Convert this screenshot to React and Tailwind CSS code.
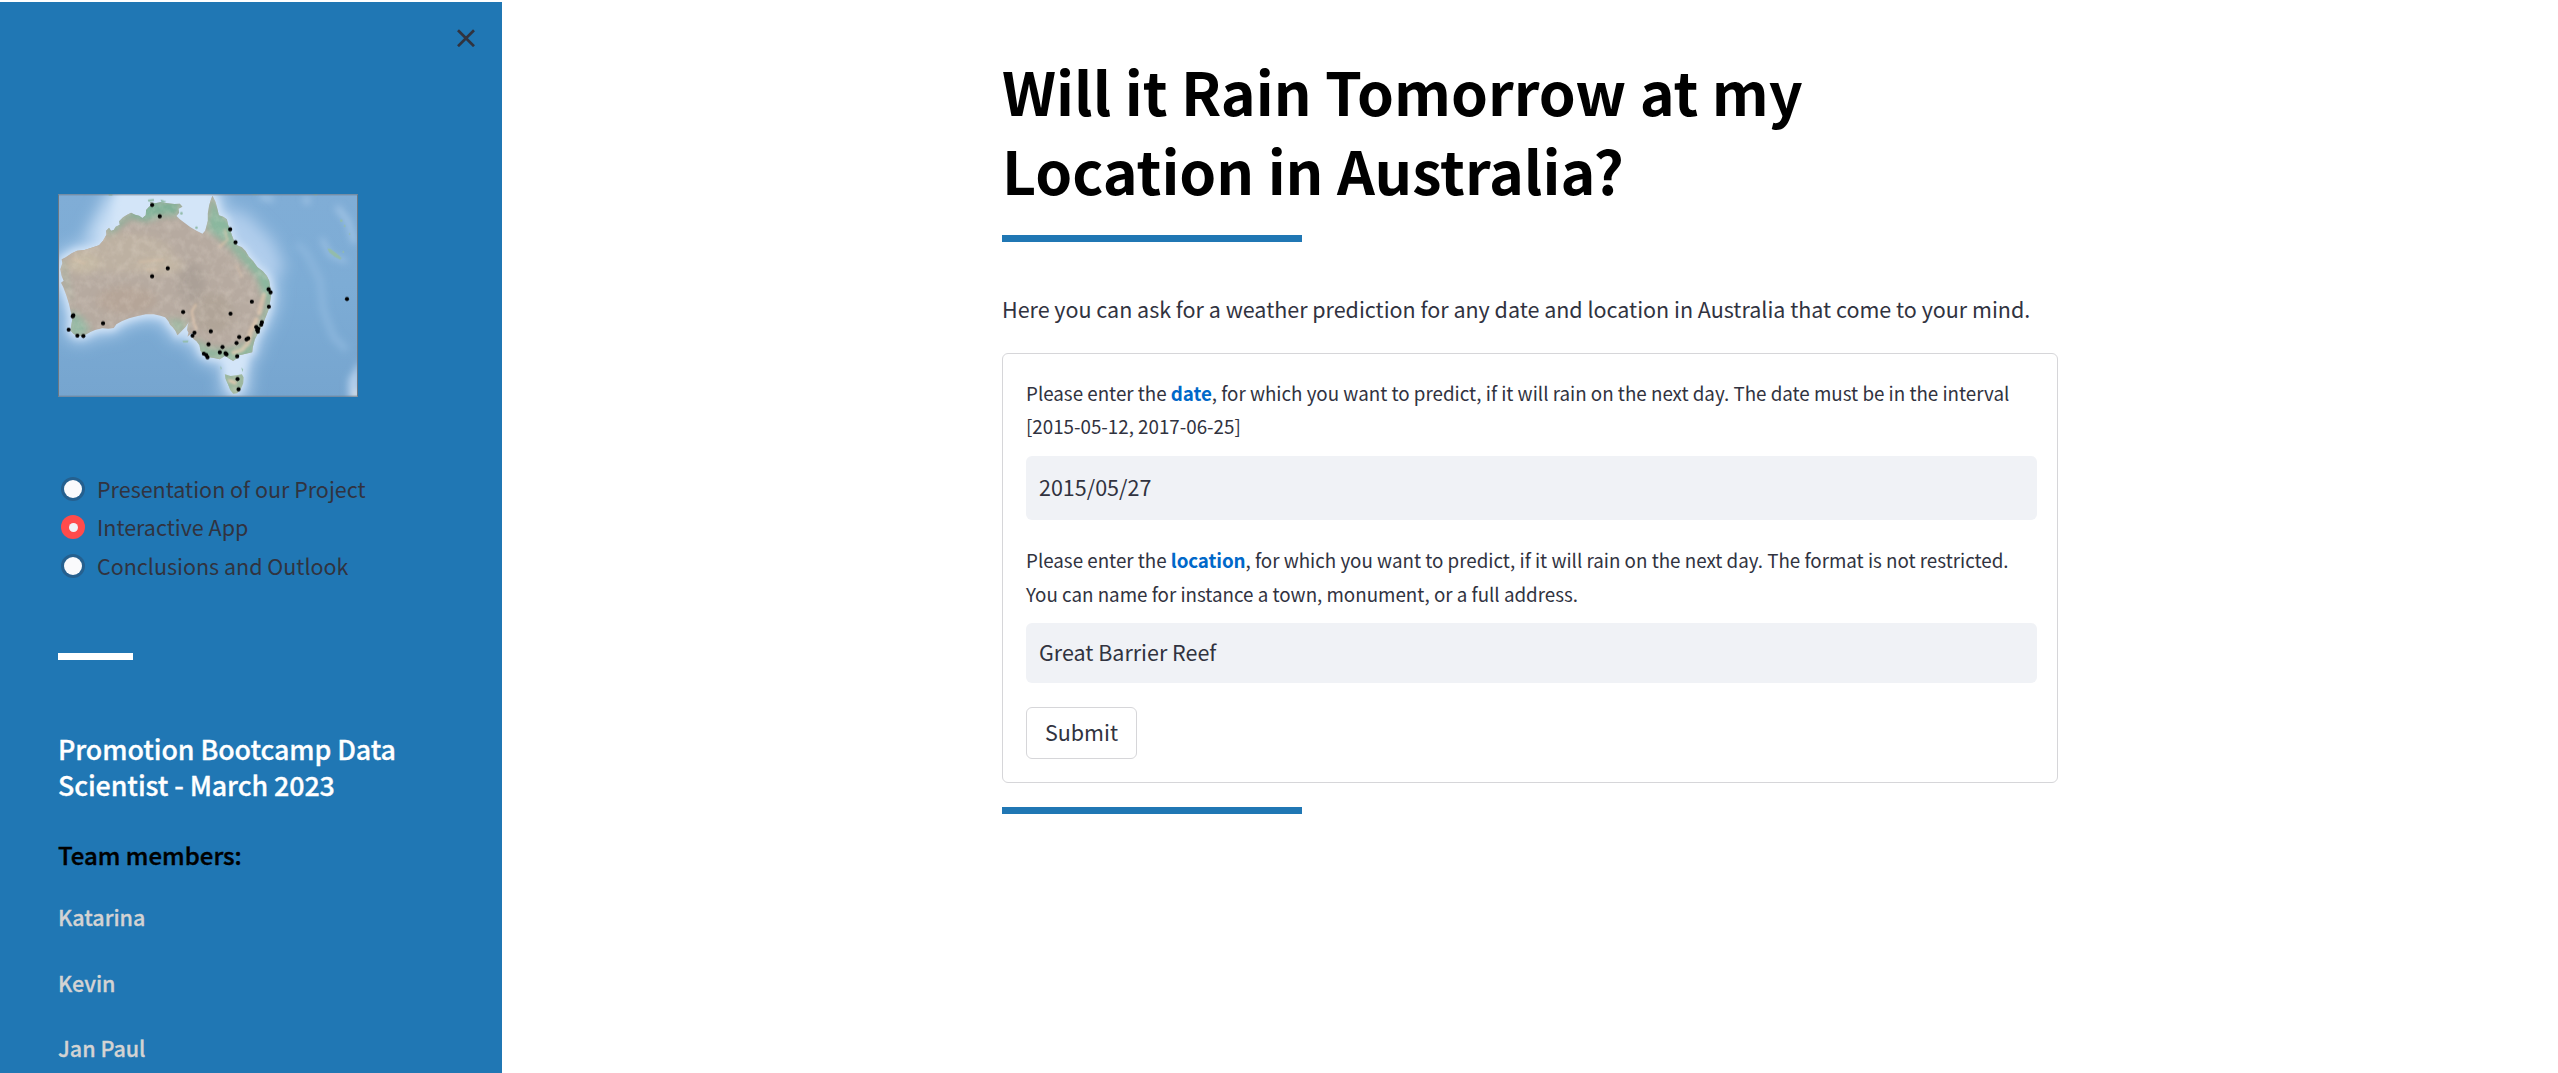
const FONT = "font-['Noto_Sans_CJK_SC','Noto_Sans',sans-serif]";

const MAINLAND =
  "M518 47 L527 66 L533 88 L537 106 L550 110 L561 118 L565 135 L571 150 L577 168 L584 186 L592 196 L606 202 L617 213 L627 230 L640 244 L653 262 L669 274 L681 288 L688 302 L691 322 L694 342 L691 362 L688 384 L681 402 L674 420 L668 434 L656 456 L645 478 L639 500 L637 517 L618 521 L598 526 L592 534 L580 543 L566 535 L556 527 L540 538 L522 534 L503 531 L490 524 L482 512 L479 496 L470 484 L461 477 L456 470 L462 458 L452 462 L443 470 L446 458 L442 450 L444 434 L447 426 L437 441 L426 452 L413 466 L407 452 L399 442 L391 434 L386 424 L376 412 L362 407 L342 403 L318 403 L294 408 L268 415 L246 424 L230 433 L222 444 L206 446 L188 445 L168 449 L152 456 L132 467 L112 468 L101 461 L93 452 L95 436 L98 416 L94 398 L88 372 L80 346 L71 322 L64 308 L72 302 L66 288 L62 268 L68 250 L66 238 L78 232 L96 220 L112 212 L134 210 L156 203 L178 196 L190 182 L200 164 L199 152 L208 143 L214 152 L222 150 L228 140 L240 134 L238 124 L250 112 L262 104 L274 98 L286 104 L298 107 L308 114 L318 106 L319 90 L328 80 L336 74 L330 66 L346 70 L364 66 L384 70 L404 72 L420 71 L428 80 L416 86 L418 98 L410 108 L420 118 L436 130 L452 142 L470 152 L488 161 L496 152 L500 138 L504 122 L504 100 L508 76 L514 56 Z";
const TASMANIA =
  "M555 583 L572 588 L590 586 L606 583 L611 592 L610 610 L603 626 L592 640 L580 641 L571 630 L564 612 L557 596 Z";

const STATIONS = [
  [337, 75], [360, 109], [571, 148], [587, 187], [384, 265], [337, 289],
  [430, 396], [572, 401], [636, 365], [686, 328], [692, 337], [687, 380],
  [921, 357], [101, 406], [99, 409], [87, 449], [113, 467], [131, 468],
  [190, 430], [464, 458], [458, 467], [513, 454], [506, 493], [492, 521],
  [499, 525], [503, 532], [548, 501], [540, 517], [557, 520], [560, 523],
  [590, 489], [598, 471], [620, 478], [625, 475], [592, 529], [666, 427],
  [664, 434], [649, 441], [655, 446], [652, 450], [654, 455], [593, 597],
  [596, 628],
];

function AustraliaMap() {
  return (
    <svg className="block h-[203px] w-[300px]" viewBox="55 42 899 609" preserveAspectRatio="none" role="img" aria-label="Weather stations in Australia">
      <defs>
        <filter id="b3" x="-30%" y="-30%" width="160%" height="160%"><feGaussianBlur stdDeviation="3" /></filter>
        <filter id="b10" x="-50%" y="-50%" width="200%" height="200%"><feGaussianBlur stdDeviation="11" /></filter>
        <filter id="b20" x="-50%" y="-50%" width="200%" height="200%"><feGaussianBlur stdDeviation="24" /></filter>
        <filter id="edge" x="-5%" y="-5%" width="110%" height="110%"><feGaussianBlur stdDeviation="1.3" /></filter>
        <filter id="relief" x="0" y="0" width="100%" height="100%">
          <feTurbulence type="fractalNoise" baseFrequency="0.04" numOctaves="4" seed="7" />
          <feColorMatrix values="0 0 0 0 0.95  0 0 0 0 0.87  0 0 0 0 0.78  1.4 0 0 0 -0.55" />
        </filter>
        <linearGradient id="sea" x1="0" y1="0" x2="0" y2="1">
          <stop offset="0" stopColor="#80add6" />
          <stop offset="0.45" stopColor="#7dacd5" />
          <stop offset="1" stopColor="#76a5cf" />
        </linearGradient>
        <clipPath id="land"><path d={MAINLAND} /><path d={TASMANIA} /></clipPath>
      </defs>
      <rect x="55" y="42" width="899" height="609" fill="url(#sea)" />
      <g fill="#b9d4ef" filter="url(#b20)">
        <path d={MAINLAND} stroke="#b3d0ee" strokeWidth="42" strokeLinejoin="round" />
        <path d="M215 20 L550 20 L520 160 L440 160 L200 175 L130 180Z" fill="#c7def5" />
        <path d="M540 80 L620 100 L700 180 L735 260 L700 310 L590 200Z" fill="#b0cdec" />
        <path d="M540 500 L640 500 L625 660 L545 650Z" />
      </g>
      <g filter="url(#b10)">
        <path d={MAINLAND} fill="#d6e6f7" stroke="#cfe2f6" strokeWidth="17" strokeLinejoin="round" />
        <path d="M232 36 L520 36 L500 165 L470 160 L400 110 L320 110 L212 145Z" fill="#d3e5f8" />
        <path d={TASMANIA} fill="#d6e6f7" stroke="#c6dcf4" strokeWidth="12" />
        <path d="M545 530 L630 520 L615 590 L555 590Z" fill="#d3e5f8" />
        <path d="M845 175 L870 225 L920 245" fill="none" stroke="#a6c7e7" strokeWidth="10" />
        <path d="M660 50 L700 58 M798 50 L802 72 M890 80 L925 125 L944 190" fill="none" stroke="#a6c7e7" strokeWidth="15" />
        <path d="M770 190 L800 220 L840 300 L850 390 L880 470 L920 510" fill="none" stroke="#8ab5dc" strokeWidth="22" />
        <path d="M960 540 L925 600 L925 655 L960 655Z" fill="#b5d0ec" />
        <path d="M960 625 L935 655 L960 655Z" fill="#fff3df" />
      </g>
      <g filter="url(#edge)">
        <path d={MAINLAND} fill="#b6aaa0" />
        <path d={TASMANIA} fill="#a5b9a0" />
      </g>
      <g clipPath="url(#land)">
        <g filter="url(#b10)">
          <ellipse cx="250" cy="220" rx="150" ry="60" fill="#bdb1a2" />
          <ellipse cx="130" cy="250" rx="50" ry="30" fill="#c5b9a5" />
          <ellipse cx="360" cy="255" rx="70" ry="28" fill="#c2b6a4" />
          <ellipse cx="455" cy="310" rx="40" ry="60" fill="#aba097" />
          <ellipse cx="520" cy="400" rx="60" ry="60" fill="#b0a498" />
          <ellipse cx="260" cy="360" rx="90" ry="40" fill="#b5a598" />
          <path d="M196 170 L210 140 L275 95 L330 60 L430 66 L412 108 L370 104 L320 124 L270 112 L225 152Z" fill="#7fb198" />
          <path d="M518 40 L540 100 L575 125 L590 190 L645 240 L700 300 L700 390 L675 360 L650 290 L600 235 L560 190 L510 155 L500 140Z" fill="#8ab89f" />
          <path d="M60 235 L72 240 L100 380 L80 330Z" fill="#a5b5a0" />
          <path d="M85 390 L125 410 L150 445 L130 475 L85 470Z" fill="#94b8a3" />
          <path d="M378 415 L445 425 L415 470Z" fill="#9ab7a0" />
          <path d="M460 475 L510 505 L560 510 L630 490 L645 525 L580 550 L480 530Z" fill="#8fb79e" />
          <path d="M690 340 L695 380 L640 525 L628 500 L660 425Z" fill="#8bb69d" />
          <path d="M555 580 L575 590 L570 640 L555 610Z M600 580 L615 590 L600 640Z" fill="#8ab49c" />
        </g>
        <g fill="none" stroke="#e6cab0" strokeLinecap="round" filter="url(#b3)">
          <path d="M672 345 L664 372 L658 400" strokeWidth="13" opacity=".65" />
          <path d="M650 418 L632 455 L624 490 L606 510 L580 518" strokeWidth="13" opacity=".7" />
          <path d="M468 374 L456 394 L462 428 L470 448" strokeWidth="6" opacity=".8" />
          <path d="M555 150 L562 180 L540 200" strokeWidth="9" opacity=".5" />
          <path d="M570 602 L585 608" strokeWidth="11" opacity=".85" />
          <path d="M300 246 L370 240 M320 268 L350 270 M100 236 L135 250 M590 255 L605 290" strokeWidth="6" opacity=".4" />
        </g>
        <rect x="55" y="42" width="640" height="609" filter="url(#relief)" opacity=".3" />
      </g>
      <g fill="#93bcab" filter="url(#edge)">
        <path d="M862 205 L872 207 L890 220 L905 234 L901 239 L884 230 L868 217Z" />
        <circle cx="904" cy="122" r="4" /><circle cx="914" cy="138" r="3" /><circle cx="929" cy="162" r="2.5" />
        <circle cx="910" cy="216" r="3" /><circle cx="425" cy="100" r="4" /><circle cx="470" cy="143" r="4" />
        <path d="M428 482 L446 481 L444 487 L430 487Z M541 558 L546 564 L543 570Z M604 562 L610 568 L608 576Z" />
        <path d="M324 59 L342 57 L343 63 L326 65Z M362 58 L380 64 L366 69Z" />
        <path d="M205 43 H218 V47 H208Z M634 42 H652 V45 H640Z M816 42 H834 L828 47Z" />
      </g>
      <g fill="#050505" filter="url(#edge)">
        {STATIONS.map(([x, y], i) => <circle key={i} cx={x} cy={y} r="6.2" />)}
      </g>
      <rect x="56.5" y="43.5" width="896" height="606" fill="none" stroke="#6c7884" strokeWidth="3" />
    </svg>
  );
}

function Radio({ label, checked }) {
  return (
    <label className="flex h-[38.5px] items-center">
      <span className={checked
        ? "-mt-px flex size-6 items-center justify-center rounded-full bg-[#ff4b4b]"
        : "flex size-6 items-center justify-center rounded-full bg-[#25608f]"}>
        <span className={checked ? "size-[9px] rounded-full bg-[#f0f2f6]" : "size-[18px] rounded-full bg-[#fafafc]"} />
      </span>
      <span className={`ml-3 text-[21.5px] leading-[38px] whitespace-nowrap ${checked ? "-mt-px" : ""}`}>{label}</span>
    </label>
  );
}

function Field({ label, value, labelClass, inputClass }) {
  return (
    <div>
      <p className={`text-[18.78px] whitespace-nowrap ${labelClass}`}>{label}</p>
      <div className={`flex items-center rounded-md bg-[#f0f2f6] px-[13px] pb-[2px] text-[21.5px] ${inputClass}`}>{value}</div>
    </div>
  );
}

const MEMBERS = ["Katarina", "Kevin", "Jan Paul"];

export default function App() {
  return (
    <div className={`flex h-[1073px] overflow-hidden bg-white text-[#31333f] ${FONT}`}>
      <aside className="mt-[2px] w-[502px] shrink-0 overflow-hidden bg-[#2077b4]">
        <div className="flex h-[192px] justify-end pt-[27px] pr-[27px]">
          <svg className="size-[18px]" viewBox="0 0 18 18" fill="none" stroke="#31333f" strokeWidth="2.7">
            <path d="M1 1.2 L17 17.2 M17 1.2 L1 17.2" />
          </svg>
        </div>
        <div className="pl-[58px]">
          <AustraliaMap />
          <div className="mt-[73px] pl-[3px]">
            <Radio label="Presentation of our Project" />
            <Radio label="Interactive App" checked />
            <Radio label="Conclusions and Outlook" />
          </div>
          <div className="mt-[67.5px] h-[7px] w-[75px] bg-white" />
          <h2 className="mt-[71px] text-[26.8px] leading-9 font-medium tracking-[-0.08px] text-white [-webkit-text-stroke:0.3px]">
            Promotion Bootcamp Data<br />Scientist - March 2023
          </h2>
          <h3 className="mt-9 text-[24px] leading-8 font-medium text-black [-webkit-text-stroke:0.4px]">Team members:</h3>
          <div className="mt-[27px] flex flex-col gap-[27.5px] text-[#d3d3d3]">
            {MEMBERS.map((name) => (
              <p key={name} className="text-[21.5px] leading-[38px] font-medium [-webkit-text-stroke:0.3px]">{name}</p>
            ))}
          </div>
        </div>
      </aside>
      <main className="flex flex-1 justify-center">
        <div className="w-[1056px]">
          <h1 className="mt-[51px] text-[59.1px] leading-[79px] font-bold text-black">
            Will it Rain Tomorrow at my<br />Location in Australia?
          </h1>
          <div className="mt-[26px] h-[7px] w-[300px] bg-[#2077b4]" />
          <p className="mt-12 text-[21.5px] leading-[38px] tracking-[-0.01px] whitespace-nowrap">
            Here you can ask for a weather prediction for any date and location in Australia that come to your mind.
          </p>
          <form className="mt-[25px] h-[430px] rounded-md border border-[#d6d6d9] pt-[22px] pr-5 pl-[23px]">
            <Field
              labelClass="h-[80px] leading-[33px]"
              inputClass="h-16"
              value="2015/05/27"
              label={<>Please enter the <b className="font-bold tracking-[-0.1px] text-[#0068c9]">date</b>, for which you want to predict, if it will rain on the next day. The date must be in the interval<br />[2015-05-12, 2017-06-25]</>}
            />
            <div className="h-[23px]" />
            <Field
              labelClass="h-[80px] leading-[34px]"
              inputClass="h-[60px]"
              value="Great Barrier Reef"
              label={<>Please enter the <b className="font-bold tracking-[-0.1px] text-[#0068c9]">location</b>, for which you want to predict, if it will rain on the next day. The format is not restricted.<br />You can name for instance a town, monument, or a full address.</>}
            />
            <button type="button" className="mt-6 flex h-[52px] w-[111px] items-center justify-center rounded-md border border-[#d6d6d9] bg-white pb-px text-[21.5px]">Submit</button>
          </form>
          <div className="mt-6 h-[7px] w-[300px] bg-[#2077b4]" />
        </div>
      </main>
    </div>
  );
}
